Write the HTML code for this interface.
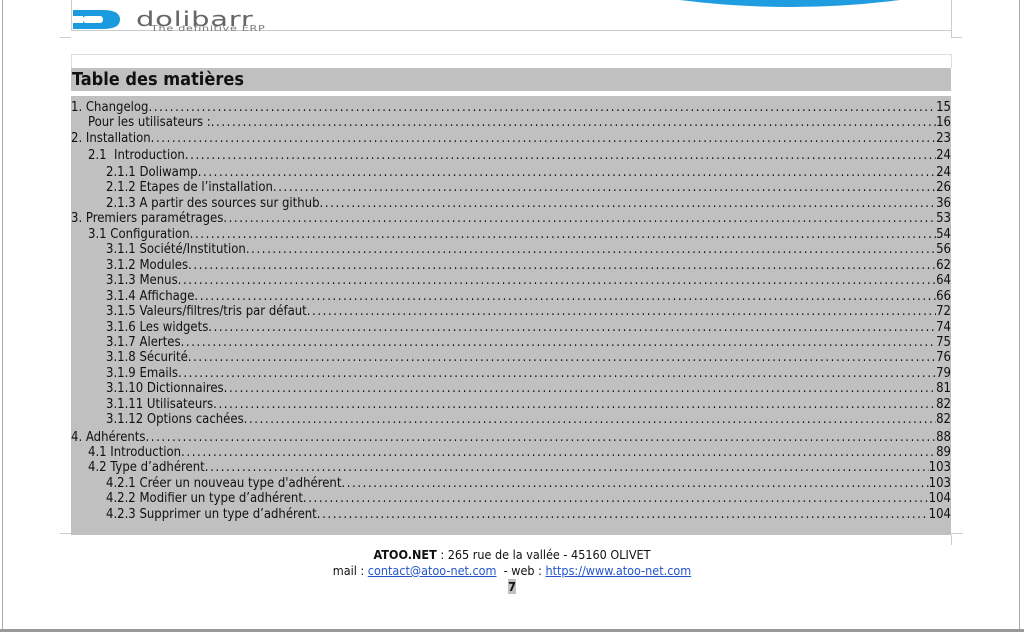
<!DOCTYPE html>
<html><head><meta charset="utf-8"><style>
body{margin:0;width:1024px;height:632px;background:#fff;position:relative;overflow:hidden;font-family:"DejaVu Sans Condensed","DejaVu Sans","Liberation Sans",sans-serif;color:#111}
.abs{position:absolute}
.toc{position:absolute;left:71px;top:96px;width:880px;height:439px;background:#c0c0c0}
.rows{position:absolute;left:0;right:0;top:2px}
.row{position:absolute;left:0;right:0;height:16px;display:flex;font-size:13px;line-height:16px;white-space:nowrap;overflow:hidden}
.row .d{flex:1;overflow:hidden;letter-spacing:1.6px}
.row .d:after{content:"......................................................................................................................................................................................................................................................"}
</style></head><body>
<div class="abs" style="left:2px;top:0;width:1px;height:630px;background:#aaa"></div>
<div class="abs" style="left:1019px;top:0;width:1px;height:630px;background:#aaa"></div>
<div class="abs" style="left:0;top:629px;width:1024px;height:3px;background:#999"></div>
<div class="abs" style="left:71px;top:0;width:1px;height:30px;background:#ccc"></div>
<div class="abs" style="left:951px;top:0;width:1px;height:37px;background:#ccc"></div>
<div class="abs" style="left:71px;top:30px;width:880px;height:1px;background:#ccc"></div>
<div class="abs" style="left:60px;top:37px;width:11px;height:1px;background:#ccc"></div>
<div class="abs" style="left:951px;top:37px;width:11px;height:1px;background:#ccc"></div>
<div class="abs" style="left:71px;top:54px;width:880px;height:1px;background:#ddd"></div>
<div class="abs" style="left:71px;top:54px;width:1px;height:14px;background:#ddd"></div>
<div class="abs" style="left:951px;top:54px;width:1px;height:14px;background:#ddd"></div>
<svg class="abs" style="left:670px;top:0" width="240" height="10"><path d="M10 0 Q120 14 230 0 Z" fill="#1f9de0"/></svg>
<svg class="abs" style="left:73px;top:10px" width="48" height="19"><path d="M0 0 H30 Q47 0 47 9.5 Q47 19 30 19 H0 V13 H10 V6 H0 Z" fill="#1a9be0"/><rect x="10" y="6" width="20" height="7" fill="#fff" rx="3"/></svg>
<div class="abs" style="left:136px;top:7px;font-family:'DejaVu Sans',sans-serif;font-size:20px;color:#666;line-height:24px;transform:scaleX(1.45);transform-origin:0 0;letter-spacing:0.5px">dolibarr</div>
<div class="abs" style="left:151px;top:24px;font-family:'DejaVu Sans',sans-serif;font-size:8px;color:#777;line-height:9px;transform:scaleX(1.4);transform-origin:0 0;letter-spacing:0.5px">The definitive ERP</div>
<div class="abs" style="left:71px;top:68px;width:880px;height:23px;background:#c0c0c0;font-size:18px;font-weight:bold;line-height:24px;padding-left:1px;box-sizing:border-box">Table des matières</div>
<div class="toc"><div class="rows">
<div class="row" style="top:2px"><span>1. Changelog</span><span class="d"></span><span>15</span></div>
<div class="row" style="top:17px;padding-left:17px"><span>Pour les utilisateurs :</span><span class="d"></span><span>16</span></div>
<div class="row" style="top:33px"><span>2. Installation</span><span class="d"></span><span>23</span></div>
<div class="row" style="top:50px;padding-left:17px"><span>2.1&nbsp; Introduction</span><span class="d"></span><span>24</span></div>
<div class="row" style="top:67px;padding-left:35px"><span>2.1.1 Doliwamp</span><span class="d"></span><span>24</span></div>
<div class="row" style="top:82px;padding-left:35px"><span>2.1.2 Étapes de l’installation</span><span class="d"></span><span>26</span></div>
<div class="row" style="top:98px;padding-left:35px"><span>2.1.3 A partir des sources sur github</span><span class="d"></span><span>36</span></div>
<div class="row" style="top:113px"><span>3. Premiers paramétrages</span><span class="d"></span><span>53</span></div>
<div class="row" style="top:129px;padding-left:17px"><span>3.1 Configuration</span><span class="d"></span><span>54</span></div>
<div class="row" style="top:144px;padding-left:35px"><span>3.1.1 Société/Institution</span><span class="d"></span><span>56</span></div>
<div class="row" style="top:160px;padding-left:35px"><span>3.1.2 Modules</span><span class="d"></span><span>62</span></div>
<div class="row" style="top:175px;padding-left:35px"><span>3.1.3 Menus</span><span class="d"></span><span>64</span></div>
<div class="row" style="top:191px;padding-left:35px"><span>3.1.4 Affichage</span><span class="d"></span><span>66</span></div>
<div class="row" style="top:206px;padding-left:35px"><span>3.1.5 Valeurs/filtres/tris par défaut</span><span class="d"></span><span>72</span></div>
<div class="row" style="top:222px;padding-left:35px"><span>3.1.6 Les widgets</span><span class="d"></span><span>74</span></div>
<div class="row" style="top:237px;padding-left:35px"><span>3.1.7 Alertes</span><span class="d"></span><span>75</span></div>
<div class="row" style="top:252px;padding-left:35px"><span>3.1.8 Sécurité</span><span class="d"></span><span>76</span></div>
<div class="row" style="top:268px;padding-left:35px"><span>3.1.9 Emails</span><span class="d"></span><span>79</span></div>
<div class="row" style="top:283px;padding-left:35px"><span>3.1.10 Dictionnaires</span><span class="d"></span><span>81</span></div>
<div class="row" style="top:299px;padding-left:35px"><span>3.1.11 Utilisateurs</span><span class="d"></span><span>82</span></div>
<div class="row" style="top:314px;padding-left:35px"><span>3.1.12 Options cachées</span><span class="d"></span><span>82</span></div>
<div class="row" style="top:332px"><span>4. Adhérents</span><span class="d"></span><span>88</span></div>
<div class="row" style="top:347px;padding-left:17px"><span>4.1 Introduction</span><span class="d"></span><span>89</span></div>
<div class="row" style="top:362px;padding-left:17px"><span>4.2 Type d’adhérent</span><span class="d"></span><span>103</span></div>
<div class="row" style="top:378px;padding-left:35px"><span>4.2.1 Créer un nouveau type d'adhérent</span><span class="d"></span><span>103</span></div>
<div class="row" style="top:393px;padding-left:35px"><span>4.2.2 Modifier un type d’adhérent</span><span class="d"></span><span>104</span></div>
<div class="row" style="top:409px;padding-left:35px"><span>4.2.3 Supprimer un type d’adhérent</span><span class="d"></span><span>104</span></div>
</div></div>
<div class="abs" style="left:951px;top:533px;width:12px;height:1px;background:#ccc"></div>
<div class="abs" style="left:951px;top:535px;width:1px;height:10px;background:#ccc"></div>
<div class="abs" style="left:60px;top:533px;width:11px;height:1px;background:#ccc"></div>
<div class="abs" style="left:0;top:547px;width:1024px;text-align:center;font-size:12.5px;line-height:16px">
<div><b>ATOO.NET</b> : 265 rue de la vallée - 45160 OLIVET</div>
<div>mail : <span style="color:#2255cc;text-decoration:underline">contact@atoo-net.com</span>&nbsp; - web : <span style="color:#2255cc;text-decoration:underline">https://www.atoo-net.com</span></div>
<div><span style="background:#c0c0c0;font-weight:bold">7</span></div>
</div>
</body></html>
